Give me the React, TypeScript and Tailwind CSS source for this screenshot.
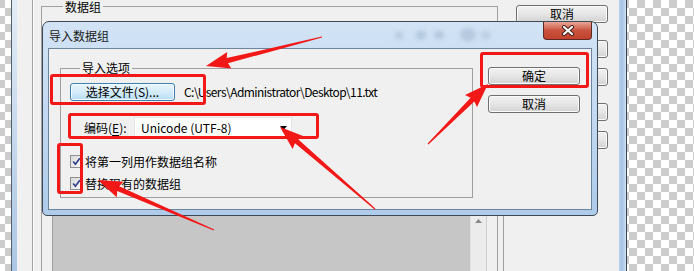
type Pt = [number, number]

const RED = '#f31818'

function arrowPoints(tail: Pt, tip: Pt, headLen = 22, headHalf = 8.5, neck = 2.6, tailHalf = 0.6) {
  const dx = tip[0] - tail[0]
  const dy = tip[1] - tail[1]
  const len = Math.hypot(dx, dy)
  const ux = dx / len
  const uy = dy / len
  const nx = -uy
  const ny = ux
  const bx = tip[0] - ux * headLen
  const by = tip[1] - uy * headLen
  const pts: Pt[] = [
    [tail[0] + nx * tailHalf, tail[1] + ny * tailHalf],
    [bx + nx * neck, by + ny * neck],
    [bx - ux * 2 + nx * headHalf, by - uy * 2 + ny * headHalf],
    tip,
    [bx - ux * 2 - nx * headHalf, by - uy * 2 - ny * headHalf],
    [bx - nx * neck, by - ny * neck],
    [tail[0] - nx * tailHalf, tail[1] - ny * tailHalf],
  ]
  return pts.map(p => `${p[0].toFixed(1)},${p[1].toFixed(1)}`).join(' ')
}

const arrows: [Pt, Pt][] = [
  [[322, 37], [206, 66]],
  [[428, 144], [488, 84]],
  [[375, 209], [280, 127]],
  [[214, 230], [98, 180]],
]

function WinButton({ children, className = '' }: { children?: React.ReactNode; className?: string }) {
  return (
    <div
      className={`h-[18px] w-[92px] rounded-[3px] border border-[#707070] bg-linear-to-b from-[#f2f2f2] via-[#e6e6e6] to-[#d2d2d2] shadow-[inset_0_0_0_1px_#fbfbfb] flex items-center justify-center leading-[14px] ${className}`}
    >
      {children}
    </div>
  )
}

function CheckBox() {
  return (
    <div className="w-[13px] h-[13px] border border-[#8e8f8f] bg-linear-to-br from-[#d9d9d9] to-[#fafafa] flex items-center justify-center shrink-0">
      <svg width="9" height="9" viewBox="0 0 9 9">
        <path d="M1.2 4.6 L3.4 7.2 L7.8 1.2" fill="none" stroke="#2a3d85" strokeWidth="1.6" />
      </svg>
    </div>
  )
}

export default function App() {
  return (
    <div className="relative w-[694px] h-[271px] overflow-hidden flex text-[12px] text-black font-['Noto_Sans_CJK_SC',sans-serif] [background-image:repeating-conic-gradient(#cccccc_0_25%,#ffffff_0_50%)] [background-size:16px_16px] [background-position:5px_0]">
      <div className="w-[11px] shrink-0" />

      {/* background window */}
      <div className="w-[616px] shrink-0 flex">
        <div className="w-[6px] border-l border-[#55606c] bg-linear-to-b from-[#e3ecf6] to-[#abc6e4]" />
        <div className="w-[601px] bg-[#f0f0f0] flex">
          <div className="w-[15px]" />
          <div className="w-[2px] border-l border-l-[#a0a0a0] border-r border-r-white" />
          <div className="w-[7px]" />
          <div className="w-[457px] h-[290px] mt-[6px] border-l border-r border-t border-[#a0a0a0] relative flex flex-col">
            <span className="absolute left-[21px] -top-[7px] px-[2px] bg-[#f0f0f0] leading-[13px]">数据组</span>
            <div className="mt-[206px] ml-[10px] flex h-[70px]">
              <div className="w-[418px] border-l border-t border-[#a0a0a0] bg-[#c6c6c6]" />
              <div className="w-[17px] bg-[#ececec] border-l border-[#e2e2e2] border-r border-r-[#d0d0d0] flex justify-center pt-[6px]">
                <svg width="7" height="4" viewBox="0 0 7 4">
                  <path d="M0 4 L3.5 0 L7 4 Z" fill="#8a8a8a" />
                </svg>
              </div>
            </div>
          </div>
          <div className="w-[5px]" />
          <div className="w-px mt-[150px] border-l border-[#a0a0a0]" />
          <div className="w-[12px]" />
          <div className="w-[92px] flex flex-col pt-[5px]">
            <WinButton>取消</WinButton>
            <WinButton className="mt-[17px]">添加</WinButton>
            <WinButton className="mt-[10px]">删除</WinButton>
            <WinButton className="mt-[17px]">导入</WinButton>
            <WinButton className="mt-[10px]">导出</WinButton>
          </div>
          <div className="w-[10px]" />
        </div>
        <div className="w-[9px] border-l border-l-[#e8f0f8] border-r border-r-[#3a4450] bg-linear-to-r from-[#b4cde8] via-[#a9c5e5] to-[#cfe0f2]" />
      </div>

      {/* front dialog */}
      <div className="absolute left-[42px] top-[21px] w-[556px] h-[195px] rounded-t-[7px] rounded-b-[5px] border border-[#3d4956] bg-linear-to-b from-[#d2e3f5] via-[#c2d8ef] to-[#aecbea] pl-[5px] pr-[5px] pb-[5px] flex flex-col">
        <div className="h-[26px] relative flex items-center pl-[1px] pt-[1px] leading-[16px]">
          <span className="text-[#1a1a1a]">导入数据组</span>
          <div className="absolute left-[347px] top-[10px] w-[8px] h-[7px] rounded-full bg-[#8ea6c0]/40 blur-[2px]" />
          <div className="absolute left-[368px] top-[9px] w-[10px] h-[8px] rounded-full bg-[#8ea6c0]/45 blur-[2px]" />
          <div className="absolute left-[386px] top-[9px] w-[10px] h-[8px] rounded-full bg-[#8ea6c0]/45 blur-[2px]" />
          <div className="absolute left-[412px] top-[6px] w-[16px] h-[13px] rounded-full bg-[#8ea6c0]/40 blur-[2px]" />
          <div className="absolute left-[433px] top-[9px] w-[9px] h-[8px] rounded-full bg-[#8ea6c0]/35 blur-[2px]" />
          <div className="absolute right-0 top-0 w-[49px] h-[18px] rounded-b-[4px] border border-t-0 border-[#5e2a24] bg-linear-to-b from-[#e8a597] via-[#c9533f] to-[#c2402d] flex items-center justify-center">
            <svg width="14" height="11" viewBox="0 0 14 11">
              <path d="M3 2 L11 9 M11 2 L3 9" stroke="#3b1a16" strokeWidth="4" strokeLinecap="round" />
              <path d="M3 2 L11 9 M11 2 L3 9" stroke="#ffffff" strokeWidth="2.2" strokeLinecap="round" />
            </svg>
          </div>
        </div>
        <div className="flex-1 border border-[#6e849c] bg-[#f0f0f0] flex">
          <div className="ml-[11px] mt-[19px] w-[413px] h-[130px] border border-[#a0a0a0] relative flex flex-col pl-[9px] pt-[14px]">
            <span className="absolute left-[19px] -top-[9px] px-[2px] bg-[#f0f0f0] leading-[16px]">导入选项</span>
            <div className="flex items-center">
              <div className="w-[105px] h-[18px] rounded-[3px] border border-[#3c7fb1] bg-linear-to-b from-[#e9f5fc] via-[#d4ecfa] to-[#b5dcf3] shadow-[inset_0_0_0_1px_#f4fbff] flex items-center justify-center leading-[14px]">
                选择文件(S)...
              </div>
              <span className="ml-[9px] leading-[16px] tracking-[-0.55px]">C:\Users\Administrator\Desktop\11.txt</span>
            </div>
            <div className="flex items-center mt-[16px] pl-[14px]">
              <span className="w-[50px] leading-[16px]">
                编码(<span className="underline underline-offset-2">E</span>):
              </span>
              <div className="w-[158px] h-[21px] bg-white border border-[#e4e4e4] flex items-center pl-[6px] pr-[4px] justify-between">
                <span className="leading-[16px]">Unicode (UTF-8)</span>
                <svg width="7" height="4" viewBox="0 0 7 4">
                  <path d="M0 0 L7 0 L3.5 4 Z" fill="#000" />
                </svg>
              </div>
            </div>
            <div className="flex items-center h-[13px] mt-[17px] gap-[2px]">
              <CheckBox />
              <span className="leading-[16px]">将第一列用作数据组名称</span>
            </div>
            <div className="flex items-center h-[13px] mt-[9px] gap-[2px]">
              <CheckBox />
              <span className="leading-[16px]">替换现有的数据组</span>
            </div>
          </div>
          <div className="ml-[15px] mt-[18px] flex flex-col">
            <WinButton>确定</WinButton>
            <WinButton className="mt-[10px]">取消</WinButton>
          </div>
        </div>
      </div>

      {/* annotations */}
      <div className="absolute left-[50px] top-[74px] w-[156px] h-[31px] border-[3px] border-[#f31818] rounded-[3px]" />
      <div className="absolute left-[68px] top-[113px] w-[251px] h-[26px] border-[3px] border-[#f31818] rounded-[3px]" />
      <div className="absolute left-[57px] top-[143px] w-[26px] h-[51px] border-[3px] border-[#f31818] rounded-[3px]" />
      <div className="absolute left-[480px] top-[52px] w-[109px] h-[36px] border-[3px] border-[#f31818] rounded-[3px]" />
      <svg className="absolute inset-0 pointer-events-none" width="694" height="271">
        {arrows.map(([tail, tip], i) => (
          <polygon key={i} points={arrowPoints(tail, tip)} fill={RED} />
        ))}
      </svg>
    </div>
  )
}
